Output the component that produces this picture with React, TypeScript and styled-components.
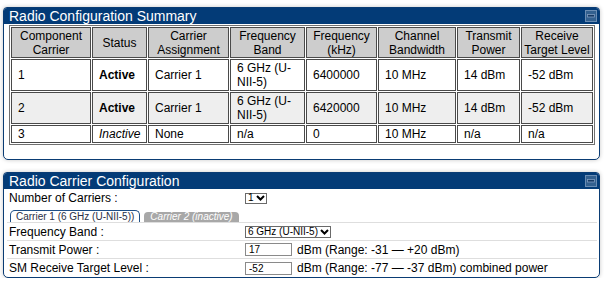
import React from 'react';
import styled, { createGlobalStyle } from 'styled-components';

const GlobalStyle = createGlobalStyle`
  *, *::before, *::after { box-sizing: border-box; }
  html, body { margin: 0; padding: 0; background: #ffffff; }
  body {
    font-family: "Liberation Sans", Arial, sans-serif;
    font-size: 12px;
    color: #000;
  }
`;

const Page = styled.div`
  display: flex;
  flex-direction: column;
  gap: 12px;
  padding: 7px 0 0 3px;
  width: 600px;
`;

const Panel = styled.section`
  width: 597px;
  border: 1px solid #0a3c74;
  border-radius: 4px 4px 5px 5px;
  background: #fff;
  box-shadow: 0 0 4px rgba(0, 0, 0, 0.22);
  overflow: hidden;
`;

const PanelHeader = styled.div`
  height: 16px;
  background: #033b77;
  color: #fff;
  font-size: 14px;
  line-height: 16px;
  padding: 0 2px 0 5px;
  display: flex;
  align-items: center;
  justify-content: space-between;
`;

const MinimizeIcon = () => (
  <svg width="12" height="12" viewBox="0 0 12 12">
    <rect x="0.5" y="0.5" width="11" height="11" fill="#33608f" stroke="#6a8cb3" />
    <rect x="2.5" y="4.5" width="7" height="2.5" fill="#173a64" stroke="#7f9cc0" strokeWidth="0.8" />
  </svg>
);

const SummaryTable = styled.table`
  width: 586px;
  margin: 1px 4px 14px 5px;
  table-layout: fixed;
  border-collapse: separate;
  border-spacing: 1px;
  border: 1px solid #707070;
  font-size: 12px;
`;

const HeadCell = styled.th<{ $w: number }>`
  width: ${p => p.$w}px;
  background: #cdcdcd;
  border: 1px solid #4a4a4a;
  font-weight: normal;
  text-align: center;
  line-height: 14px;
  padding: 1px 2px 0;
`;

const Row = styled.tr<{ $shade?: boolean }>`
  background: ${p => (p.$shade ? '#eeeeee' : '#ffffff')};
`;

const Cell = styled.td<{ $status?: 'on' | 'off' }>`
  border: 1px solid #4a4a4a;
  line-height: 14px;
  padding: 1px 6px;
  vertical-align: middle;
  font-weight: ${p => (p.$status === 'on' ? 'bold' : 'normal')};
  font-style: ${p => (p.$status === 'off' ? 'italic' : 'normal')};
`;

const FormBody = styled.div`
  padding: 0 2px 0 3px;
`;

const FormRow = styled.div<{ $line?: boolean }>`
  display: grid;
  grid-template-columns: 238px 1fr;
  align-items: center;
  height: 18px;
  border-bottom: ${p => (p.$line ? '1px solid #dedede' : 'none')};
`;

const Label = styled.div`
  padding-left: 2px;
  font-size: 12px;
  line-height: 14px;
  white-space: nowrap;
`;

const Value = styled.div`
  display: flex;
  align-items: center;
  gap: 5px;
  white-space: nowrap;
`;

const TabBar = styled.div`
  height: 16px;
  display: flex;
  align-items: flex-end;
  gap: 4px;
  padding-left: 3px;
  border-bottom: 1px solid #dedede;
`;

const Tab = styled.div<{ $active?: boolean }>`
  font-size: 10px;
  padding: 0 ${p => (p.$active ? 5 : 6)}px;
  height: ${p => (p.$active ? 12 : 10)}px;
  line-height: ${p => (p.$active ? 11 : 10)}px;
  border-radius: ${p => (p.$active ? '5px 5px 0 0' : '4px 4px 0 0')};
  border: ${p => (p.$active ? '1px solid #1f4f86' : 'none')};
  border-bottom: none;
  background: ${p => (p.$active ? '#fff' : '#a8a8a8')};
  color: ${p => (p.$active ? '#2b2f45' : '#fff')};
  font-style: ${p => (p.$active ? 'normal' : 'italic')};
`;

const FakeSelect = styled.span<{ $h: number }>`
  display: inline-flex;
  align-items: center;
  gap: 2px;
  height: ${p => p.$h}px;
  border: 1px solid #6a6a6a;
  padding: 0 1px 0 2px;
  font-size: 10px;
  line-height: 10px;
  color: #000;
`;

const Chevron = () => (
  <svg width="9" height="6" viewBox="0 0 9 6">
    <path d="M1 1 L4.5 4.5 L8 1" fill="none" stroke="#000" strokeWidth="2" />
  </svg>
);

const NumInput = styled.input`
  width: 47px;
  height: 13px;
  border: 1px solid #8a8a8a;
  padding: 0 3px;
  margin: 0;
  font-family: "Liberation Sans", Arial, sans-serif;
  font-size: 10px;
  color: #000;
  outline: none;
`;

type Carrier = {
  id: string;
  status: string;
  active: boolean;
  assignment: string;
  band: string;
  freq: string;
  bw: string;
  power: string;
  target: string;
};

const columns: [string, number][] = [
  ['Component Carrier', 80],
  ['Status', 55],
  ['Carrier Assignment', 81],
  ['Frequency Band', 75],
  ['Frequency (kHz)', 71],
  ['Channel Bandwidth', 78],
  ['Transmit Power', 63],
  ['Receive Target Level', 72],
];

const carriers: Carrier[] = [
  { id: '1', status: 'Active', active: true, assignment: 'Carrier 1', band: '6 GHz (U-NII-5)', freq: '6400000', bw: '10 MHz', power: '14 dBm', target: '-52 dBm' },
  { id: '2', status: 'Active', active: true, assignment: 'Carrier 1', band: '6 GHz (U-NII-5)', freq: '6420000', bw: '10 MHz', power: '14 dBm', target: '-52 dBm' },
  { id: '3', status: 'Inactive', active: false, assignment: 'None', band: 'n/a', freq: '0', bw: '10 MHz', power: 'n/a', target: 'n/a' },
];

const App = () => {
  return (
    <>
      <GlobalStyle />
      <Page>
        <Panel>
          <PanelHeader>
            <span>Radio Configuration Summary</span>
            <MinimizeIcon />
          </PanelHeader>
          <SummaryTable>
            <thead>
              <tr>
                {columns.map(([name, w]) => (
                  <HeadCell key={name} $w={w}>{name}</HeadCell>
                ))}
              </tr>
            </thead>
            <tbody>
              {carriers.map((c, i) => (
                <Row key={c.id} $shade={i === 1}>
                  <Cell>{c.id}</Cell>
                  <Cell $status={c.active ? 'on' : 'off'}>{c.status}</Cell>
                  <Cell>{c.assignment}</Cell>
                  <Cell>{c.band}</Cell>
                  <Cell>{c.freq}</Cell>
                  <Cell>{c.bw}</Cell>
                  <Cell>{c.power}</Cell>
                  <Cell>{c.target}</Cell>
                </Row>
              ))}
            </tbody>
          </SummaryTable>
        </Panel>

        <Panel>
          <PanelHeader>
            <span>Radio Carrier Configuration</span>
            <MinimizeIcon />
          </PanelHeader>
          <FormBody>
            <FormRow>
              <Label>Number of Carriers :</Label>
              <Value>
                <FakeSelect $h={11}>1<Chevron /></FakeSelect>
              </Value>
            </FormRow>
            <TabBar>
              <Tab $active>Carrier 1 (6 GHz (U-NII-5))</Tab>
              <Tab>Carrier 2 (inactive)</Tab>
            </TabBar>
            <FormRow $line>
              <Label>Frequency Band :</Label>
              <Value>
                <FakeSelect $h={12}>6 GHz (U-NII-5)<Chevron /></FakeSelect>
              </Value>
            </FormRow>
            <FormRow $line>
              <Label>Transmit Power :</Label>
              <Value>
                <NumInput readOnly defaultValue="17" />
                <span>dBm (Range: -31 — +20 dBm)</span>
              </Value>
            </FormRow>
            <FormRow>
              <Label>SM Receive Target Level :</Label>
              <Value>
                <NumInput readOnly defaultValue="-52" />
                <span>dBm (Range: -77 — -37 dBm) combined power</span>
              </Value>
            </FormRow>
          </FormBody>
        </Panel>
      </Page>
    </>
  );
};

export default App;
